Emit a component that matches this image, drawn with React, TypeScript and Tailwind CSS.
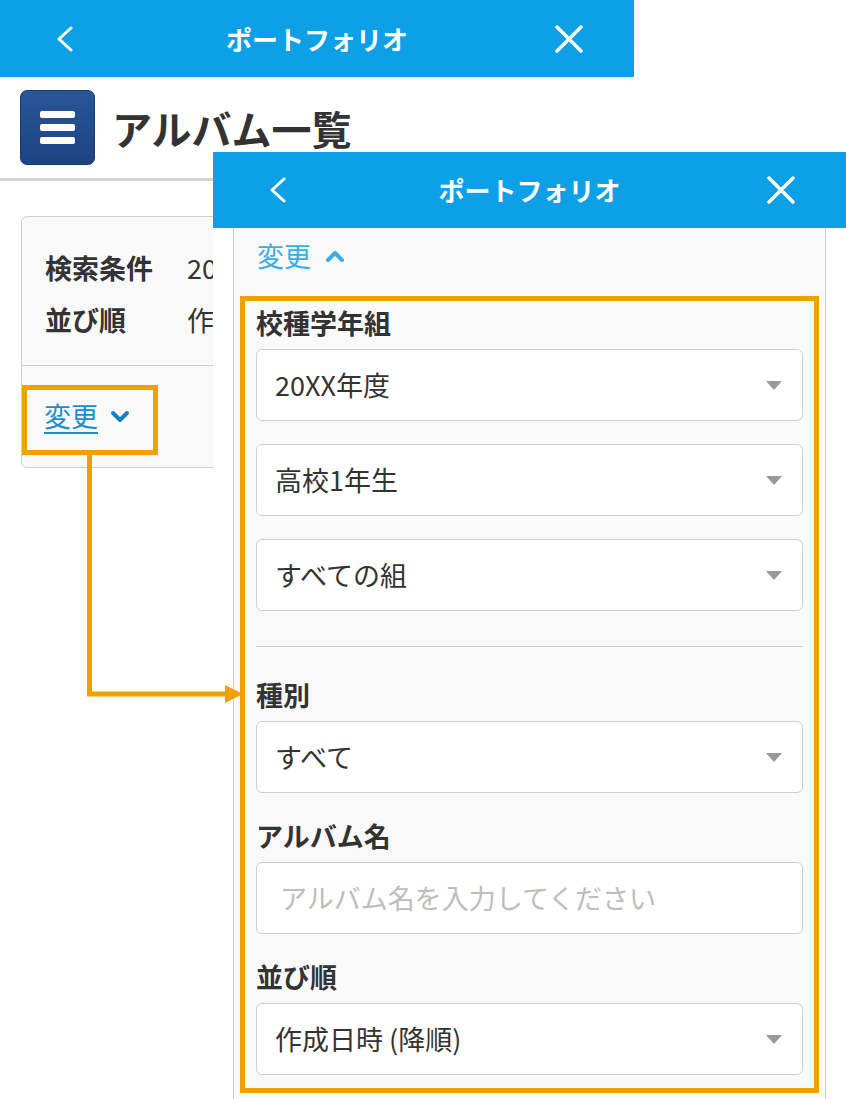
import type { ReactNode } from 'react'

const FONT = "font-['Noto_Sans_CJK_JP','Noto_Sans',sans-serif]"

function ChevronLeft() {
  return (
    <svg width="18" height="26" viewBox="0 0 18 26" aria-hidden>
      <polyline points="15,2 3,13 15,24" fill="none" stroke="white" strokeWidth="3" strokeLinecap="round" strokeLinejoin="round" />
    </svg>
  )
}

function CloseIcon() {
  return (
    <svg width="28" height="28" viewBox="0 0 28 28" aria-hidden>
      <path d="M2 2 L26 26 M26 2 L2 26" stroke="white" strokeWidth="3.5" strokeLinecap="round" />
    </svg>
  )
}

function Header({ tall }: { tall?: boolean }) {
  return (
    <div
      className={`grid grid-cols-[1fr_auto_1fr] items-center bg-[#0ea0e6] text-white ${
        tall ? 'h-[77px]' : 'h-[76px]'
      }`}
    >
      <div className="pl-[56px]">
        <ChevronLeft />
      </div>
      <div className="text-[26px] font-bold leading-none">ポートフォリオ</div>
      <div className="flex justify-end pr-[51px]">
        <CloseIcon />
      </div>
    </div>
  )
}

function Caret({ up, color }: { up?: boolean; color: string }) {
  return (
    <svg width="20" height="13" viewBox="0 0 20 13" aria-hidden>
      <polyline
        points={up ? '3,10 10,3 17,10' : '3,3 10,10 17,3'}
        fill="none"
        stroke={color}
        strokeWidth="4"
        strokeLinecap="round"
        strokeLinejoin="round"
      />
    </svg>
  )
}

function Select({ value }: { value: string }) {
  return (
    <div className="flex h-[72px] items-center justify-between rounded-[6px] border border-[#cfcfcf] bg-white pl-[18px] pr-[20px] text-[27px] text-[#333]">
      <span>{value}</span>
      <svg width="16" height="9" viewBox="0 0 16 9" aria-hidden>
        <polygon points="0,0 16,0 8,9" fill="#999" />
      </svg>
    </div>
  )
}

function Label({ children, className = '' }: { children: ReactNode; className?: string }) {
  return <div className={`mb-2 h-[36px] text-[27px] font-bold leading-[36px] text-[#333] ${className}`}>{children}</div>
}

function BackScreen() {
  return (
    <div className="absolute left-0 top-0 h-full w-[634px] bg-white">
      <Header tall />
      <div className="flex h-[104px] items-center gap-[17px] border-b-[3px] border-[#d5d5d5] px-5">
        <div className="flex h-[75px] w-[75px] flex-col items-center justify-center gap-[6px] rounded-[7px] border border-[#173a72] bg-gradient-to-b from-[#2a5599] to-[#1d4482]">
          <span className="h-[7px] w-[35px] rounded-[2px] bg-white" />
          <span className="h-[7px] w-[35px] rounded-[2px] bg-white" />
          <span className="h-[7px] w-[35px] rounded-[2px] bg-white" />
        </div>
        <h1 className="text-[40px] font-bold leading-none text-[#333]">アルバム一覧</h1>
      </div>
      <div className="mx-[21px] mt-[35px] overflow-hidden rounded-[6px] border border-[#cfcfcf] bg-[#f9f9f9]">
        {/* values are cut where the opened panel covers this screen */}
        <div className="border-b border-[#cfcfcf] px-[23px] pb-[19px] pt-[25px] text-[27px] text-[#333]">
          <div className="grid h-[52px] grid-cols-[142px_26px] items-center whitespace-nowrap">
            <span className="font-bold">検索条件</span>
            <span className="overflow-hidden">20XX年度</span>
          </div>
          <div className="grid h-[52px] grid-cols-[142px_26px] items-center whitespace-nowrap">
            <span className="font-bold">並び順</span>
            <span className="overflow-hidden">作成日時</span>
          </div>
        </div>
        <div className="flex h-[101px] items-center gap-[12px] px-[22px]">
          <span className="text-[27px] text-[#1a8fd0] underline underline-offset-[5px]">変更</span>
          <Caret color="#1580c0" />
        </div>
      </div>
    </div>
  )
}

function FrontScreen() {
  return (
    <div className="absolute left-[213px] top-[152px] flex h-[947px] w-[633px] flex-col bg-white">
      <Header />
      <div className="mx-[20px] flex-1 border-x border-[#cfcfcf] bg-[#f9f9f9]">
        <div className="flex h-[56px] items-center gap-[14px] pl-[23px]">
          <span className="text-[27px] text-[#3aaee2]">変更</span>
          <Caret up color="#3aaee2" />
        </div>
        <div className="mx-[6px] mt-[12px] border-[5px] border-[#f2a000] px-[11px] pb-[13px] pt-[4px]">
          <Label>校種学年組</Label>
          <div className="flex flex-col gap-[23px]">
            <Select value="20XX年度" />
            <Select value="高校1年生" />
            <Select value="すべての組" />
          </div>
          <div className="mt-[35px] h-px bg-[#cfcfcf]" />
          <Label className="mt-[30px]">種別</Label>
          <Select value="すべて" />
          <Label className="mt-[25px]">アルバム名</Label>
          <div className="flex h-[72px] items-center rounded-[6px] border border-[#cfcfcf] bg-white pl-[23px] text-[27px] text-[#bdbdbd]">
            アルバム名を入力してください
          </div>
          <Label className="mt-[25px]">並び順</Label>
          <Select value="作成日時 (降順)" />
        </div>
      </div>
    </div>
  )
}

export default function App() {
  return (
    <div className={`relative h-[1099px] w-[846px] overflow-hidden bg-white ${FONT}`}>
      <BackScreen />
      <FrontScreen />
      {/* annotation: highlight on the back screen + connector to the opened panel */}
      <div className="absolute left-[22px] top-[385px] h-[70px] w-[136px] border-[5px] border-[#f2a000]" />
      <svg className="pointer-events-none absolute left-0 top-0" width="846" height="1099" aria-hidden>
        <polyline points="89.5,455 89.5,694 228,694" fill="none" stroke="#f2a000" strokeWidth="5" />
        <polygon points="225,685 243,694 225,703" fill="#f2a000" />
      </svg>
    </div>
  )
}
